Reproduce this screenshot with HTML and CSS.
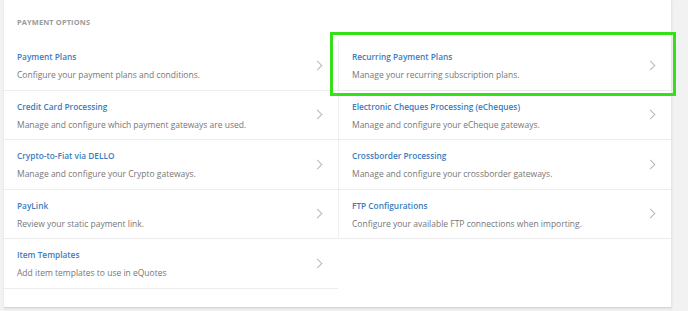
FILE: index.html
```html
<!DOCTYPE html>
<html lang="en">
<head>
  <meta charset="UTF-8" />
  <meta name="viewport" content="width=device-width, initial-scale=1.0" />
  <title>Payment Options</title>
  <link rel="stylesheet" href="styles.css">
</head>
<body>
  <div class="card">
    <h2 class="card-title">Payment Options</h2>

    <div class="options">
      <a class="option" href="#">
        <div class="option-text">
          <div class="option-name">Payment Plans</div>
          <div class="option-desc">Configure your payment plans and conditions.</div>
        </div>
        <span class="chevron"></span>
      </a>
      <a class="option right" href="#">
        <div class="option-text">
          <div class="option-name">Recurring Payment Plans</div>
          <div class="option-desc">Manage your recurring subscription plans.</div>
        </div>
        <span class="chevron"></span>
      </a>
      <a class="option" href="#">
        <div class="option-text">
          <div class="option-name">Credit Card Processing</div>
          <div class="option-desc">Manage and configure which payment gateways are used.</div>
        </div>
        <span class="chevron"></span>
      </a>
      <a class="option right" href="#">
        <div class="option-text">
          <div class="option-name">Electronic Cheques Processing (eCheques)</div>
          <div class="option-desc">Manage and configure your eCheque gateways.</div>
        </div>
        <span class="chevron"></span>
      </a>
      <a class="option" href="#">
        <div class="option-text">
          <div class="option-name">Crypto-to-Fiat via DELLO</div>
          <div class="option-desc">Manage and configure your Crypto gateways.</div>
        </div>
        <span class="chevron"></span>
      </a>
      <a class="option right" href="#">
        <div class="option-text">
          <div class="option-name">Crossborder Processing</div>
          <div class="option-desc">Manage and configure your crossborder gateways.</div>
        </div>
        <span class="chevron"></span>
      </a>
      <a class="option" href="#">
        <div class="option-text">
          <div class="option-name">PayLink</div>
          <div class="option-desc">Review your static payment link.</div>
        </div>
        <span class="chevron"></span>
      </a>
      <a class="option right" href="#">
        <div class="option-text">
          <div class="option-name">FTP Configurations</div>
          <div class="option-desc">Configure your available FTP connections when importing.</div>
        </div>
        <span class="chevron"></span>
      </a>
      <a class="option" href="#">
        <div class="option-text">
          <div class="option-name">Item Templates</div>
          <div class="option-desc">Add item templates to use in eQuotes</div>
        </div>
        <span class="chevron"></span>
      </a>
    </div>

    <!-- highlight drawn over the screenshot -->
    <div class="highlight"></div>
  </div>
</body>
</html>
```

FILE: styles.css
```css
body {
  background-color: #f2f2f2;
  font-family: "Open Sans", "Noto Sans", sans-serif;
  margin: 0;
  padding: 0 16px 5px 4px;
}
.card {
  position: relative;
  background-color: #ffffff;
  border-bottom: 1px solid #d6d6d6;
  border-right: 1px solid #e6e6e6;
  box-shadow: 0 1px 2px rgba(0, 0, 0, 0.08);
  padding: 16px 0 18px;
}
.card-title {
  margin: 0 0 0 13px;
  font-size: 7.4px;
  font-weight: 700;
  letter-spacing: 0.15px;
  text-transform: uppercase;
  color: #9a9a9a;
  line-height: 12px;
}
.options {
  display: grid;
  grid-template-columns: 334px 1fr;
  margin-top: 13px;
}
.option {
  display: flex;
  align-items: center;
  height: 46.5px;
  padding: 2px 17px 0 13px;
  border-bottom: 1px solid #ececec;
  text-decoration: none;
}
.option.right {
  border-left: 1px solid #efefef;
  padding-left: 13px;
}
.option-text {
  flex: 1;
}
.option-name {
  font-size: 8.3px;
  font-weight: 600;
  color: #3a7cc0;
  line-height: 12px;
}
.option-desc {
  font-size: 8.5px;
  color: #777777;
  line-height: 12px;
  margin-top: 6px;
}
.chevron {
  width: 6px;
  height: 6px;
  margin-top: -2px;
  border-top: 1px solid #b8b8b8;
  border-right: 1px solid #b8b8b8;
  transform: rotate(45deg);
}
.highlight {
  position: absolute;
  left: 326px;
  top: 32px;
  width: 340px;
  height: 58px;
  border: 3px solid #36e019;
}
```
